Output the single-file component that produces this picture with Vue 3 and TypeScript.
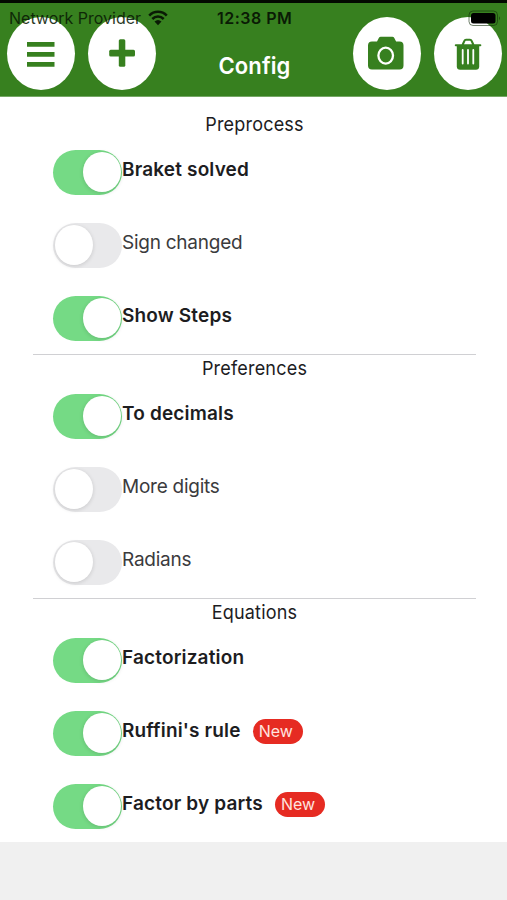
<script setup lang="ts">
import { reactive } from 'vue'

interface Option {
  label: string
  on: boolean
  isNew?: boolean
}
interface Section {
  title: string
  options: Option[]
}

const sections = reactive<Section[]>([
  {
    title: 'Preprocess',
    options: [
      { label: 'Braket solved', on: true },
      { label: 'Sign changed', on: false },
      { label: 'Show Steps', on: true },
    ],
  },
  {
    title: 'Preferences',
    options: [
      { label: 'To decimals', on: true },
      { label: 'More digits', on: false },
      { label: 'Radians', on: false },
    ],
  },
  {
    title: 'Equations',
    options: [
      { label: 'Factorization', on: true },
      { label: "Ruffini's rule", on: true, isNew: true },
      { label: 'Factor by parts', on: true, isNew: true },
    ],
  },
])
</script>

<template>
  <div class="screen">
    <header class="header">
      <div class="status">
        <span class="carrier">Network Provider</span>
        <svg class="wifi" viewBox="0 0 20 16">
          <path d="M1.2 5.6C6 .6 14 .6 18.8 5.6M4.3 9C7.5 5.8 12.500 5.800 15.700 9" fill="none" stroke="#0a1b05" stroke-width="2.500" />
          <path d="M6.500 11.500Q10 8.500 13.500 11.500L10 15.200Z" fill="#0a1b05" />
        </svg>
        <span class="clock">12:38 PM</span>
        <svg class="battery" viewBox="0 0 34 17">
          <rect x="1" y="1" width="28.500" height="14.500" rx="4" fill="none" stroke="#122d0a" stroke-opacity=".6" />
          <rect x="3" y="3" width="24.500" height="10.500" rx="2.500" fill="#000" />
          <path d="M31 6.200q2 2 0 4z" fill="#122d0a" fill-opacity=".6" />
        </svg>
      </div>
      <button class="round" aria-label="Menu">
        <svg viewBox="0 0 68 73">
          <path d="M20 25h27.500v4.800H20zM20 35h27.500v4.800H20zM20 45h27.500v4.800H20z" fill="#37801f" />
        </svg>
      </button>
      <button class="round" aria-label="Add">
        <svg viewBox="0 0 68 73">
          <rect x="21.200" y="32.800" width="25.800" height="6.800" rx="1.500" fill="#37801f" />
          <rect x="30.800" y="22.300" width="6.500" height="27.500" rx="1.500" fill="#37801f" />
        </svg>
      </button>
      <h1 class="title"><span>Config</span></h1>
      <button class="round" aria-label="Camera">
        <svg viewBox="0 0 68 73">
          <path d="M19 24.500h5l1.800-3.500q.6-1.300 2-1.300h11.500q1.400 0 2 1.300l1.800 3.500H46.500q4 0 4 4v20q0 4-4 4H19q-4 0-4-4v-20q0-4 4-4z" fill="#37801f" />
          <ellipse cx="32.700" cy="38.600" rx="7.300" ry="8" fill="none" stroke="#fff" stroke-width="2.300" />
        </svg>
      </button>
      <button class="round" aria-label="Delete">
        <svg viewBox="0 0 68 73">
          <path d="M21.800 28.300h24.500M28.500 28l2-4.300q.4-1 1.500-1h4q1.100 0 1.500 1l2 4.300" fill="none" stroke="#37801f" stroke-width="2.100" stroke-linecap="round" />
          <path d="M22.800 28h22.400v21.500q-.2 3.200-3.200 3.200H26q-3 0-3.200-3.200z" fill="#37801f" />
          <path d="M28.700 33v13.500M34 33v13.500M39.300 33v13.500" stroke="#fff" stroke-width="1.800" stroke-linecap="round" />
        </svg>
      </button>
    </header>
    <main class="content">
      <section v-for="section in sections" :key="section.title" class="section">
        <h2 class="heading"><span>{{ section.title }}</span></h2>
        <div v-for="option in section.options" :key="option.label" class="row">
          <button
            class="toggle"
            :class="{ on: option.on }"
            role="switch"
            :aria-checked="option.on"
            :aria-label="option.label"
            @click="option.on = !option.on"
          >
            <i class="knob"></i>
          </button>
          <span class="label" :class="{ strong: option.on }">{{ option.label }}</span>
          <span v-if="option.isNew" class="badge">New</span>
        </div>
      </section>
    </main>
  </div>
</template>

<style>
body {
  background: #f0f0f0;
}
</style>

<style scoped>
.screen {
  box-sizing: border-box;
  width: 507px;
  height: 900px;
  overflow: hidden;
  background: #f0f0f0;
  font-family: Inter, 'Liberation Sans', sans-serif;
  color: #1d1d1f;
}
.screen * {
  box-sizing: border-box;
}
button {
  border: 0;
  padding: 0;
  margin: 0;
  flex: none;
}
.header {
  position: relative;
  display: flex;
  gap: 13px;
  height: 97px;
  padding: 14px 5px 0 7px;
  border-top: 3px solid #020a00;
  border-bottom: 1px solid #75a765;
  background: #37801f;
}
.round {
  width: 68px;
  height: 73px;
  border-radius: 50%;
  background: #fff;
}
.round svg {
  display: block;
  width: 68px;
  height: 73px;
}
.title {
  flex: 1;
  margin: 0;
  padding-top: 34px;
  text-align: center;
  font-size: 22px;
  line-height: 28px;
  font-weight: 600;
  letter-spacing: 0.1px;
  color: #fff;
}
.title span,
.heading span {
  display: inline-block;
  transform: scaleY(1.07);
}
.status {
  position: absolute;
  z-index: 1;
  top: 5px;
  left: 9px;
  right: 5px;
  display: grid;
  grid-template-columns: 139px 69px 1fr 34px;
  align-items: center;
  height: 20px;
  font-size: 16px;
  color: #0a1b05;
  white-space: nowrap;
}
.carrier {
  opacity: 0.88;
}
.wifi {
  width: 20px;
  height: 16px;
}
.clock {
  font-weight: 600;
  letter-spacing: 0.5px;
}
.battery {
  width: 34px;
  height: 17px;
}
.content {
  height: 745px;
  padding: 14px 31px 0 33px;
  background: #fff;
}
.section {
  height: 244px;
  border-bottom: 1px solid #d0d0d3;
}
.section:last-child {
  height: 243px;
  border: 0;
}
.heading {
  margin: 0;
  height: 25px;
  text-align: center;
  font-size: 18px;
  line-height: 27px;
  font-weight: 400;
  letter-spacing: 0.2px;
}
.row {
  display: flex;
  align-items: center;
  height: 73px;
  padding-left: 20px;
}
.toggle {
  width: 69px;
  height: 45px;
  margin-bottom: 1px;
  padding: 2px 1.500px;
  border-radius: 23px;
  background: #e9e9eb;
  display: flex;
}
.toggle.on {
  justify-content: flex-end;
  background: #75da85;
}
.knob {
  width: 38px;
  height: 40px;
  border-radius: 50%;
  background: #fff;
  box-shadow: 0 1px 4px rgba(0, 0, 0, 0.14);
}
.label {
  font-size: 19px;
  line-height: 24px;
  margin-bottom: 6px;
  letter-spacing: -0.25px;
  color: #3b3b3d;
  white-space: nowrap;
}
.label.strong {
  font-weight: 600;
  letter-spacing: 0.16px;
  color: #1d1d1f;
}
.badge {
  width: 50px;
  height: 25px;
  margin-left: 12px;
  margin-bottom: 5px;
  padding-left: 6px;
  border-radius: 13px;
  background: #e62b22;
  color: #ffe3df;
  font-size: 16px;
  line-height: 25px;
}
</style>
